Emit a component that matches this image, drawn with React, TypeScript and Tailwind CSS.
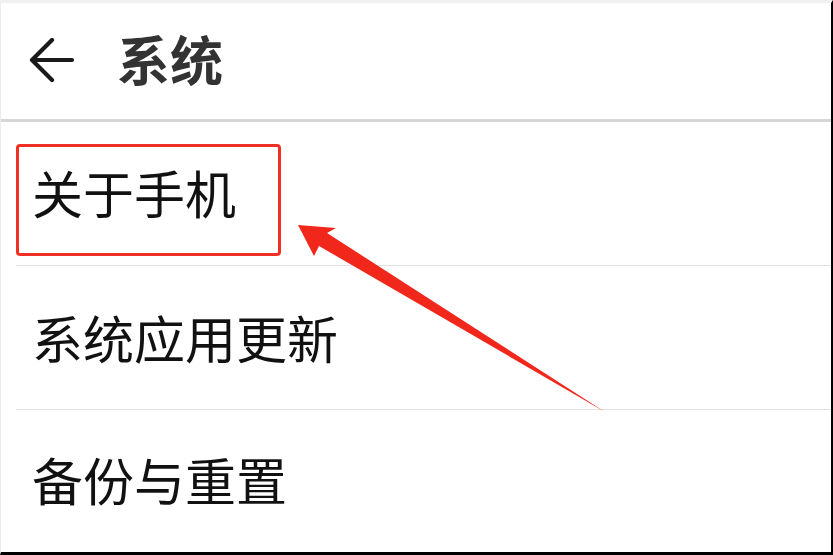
import React from "react";

const font = { fontFamily: '"Noto Sans CJK SC", "Noto Sans", sans-serif' };

function BackArrow() {
  return (
    <svg width="48" height="46" viewBox="0 0 48 46" fill="none" className="shrink-0">
      <path
        d="M44 22H5M24 2L4 22L24 42"
        stroke="#1a1a1a"
        strokeWidth="4.2"
        strokeLinecap="round"
        strokeLinejoin="round"
      />
    </svg>
  );
}

function PointerArrow() {
  // red annotation arrow pointing at the highlighted row
  return (
    <svg
      className="pointer-events-none absolute left-0 top-0"
      width="833"
      height="555"
      viewBox="0 0 833 555"
    >
      <polygon
        points="297,222 335,225 326,230 604,409 318,243 313,253"
        fill="#f2271c"
      />
    </svg>
  );
}

export default function App() {
  return (
    <div
      className="relative flex h-[555px] w-[833px] flex-col overflow-hidden border-b-[3px] border-l border-r-2 border-t-[3px] border-b-black border-l-[#ececec] border-r-black border-t-[#f0f0f0] bg-white"
      style={font}
    >
      {/* Header */}
      <div className="flex h-[119px] shrink-0 items-center border-b-[3px] border-[#d6d6d6] pl-[27px]">
        <BackArrow />
        <span className="mb-[6px] ml-[41px] text-[53px] font-bold leading-none text-[#333333]">系统</span>
      </div>

      {/* List */}
      <div className="flex flex-1 flex-col pl-[15px]">
        <div className="flex h-[144px] shrink-0 items-start border-b border-[#e2e2e2] pt-[22px]">
          <div className="flex h-[112px] w-[265px] items-center rounded-[4px] border-[3px] border-[#ee3124] pb-[16px] pl-[13px]">
            <span className="text-[51px] leading-none text-[#111111]">关于手机</span>
          </div>
        </div>
        <div className="flex h-[144px] shrink-0 items-center border-b border-[#e2e2e2] pl-[16px]">
          <span className="text-[51px] leading-none text-[#111111]">系统应用更新</span>
        </div>
        <div className="flex flex-1 items-center pb-[4px] pl-[16px]">
          <span className="text-[51px] leading-none text-[#111111]">备份与重置</span>
        </div>
      </div>

      <PointerArrow />
    </div>
  );
}
